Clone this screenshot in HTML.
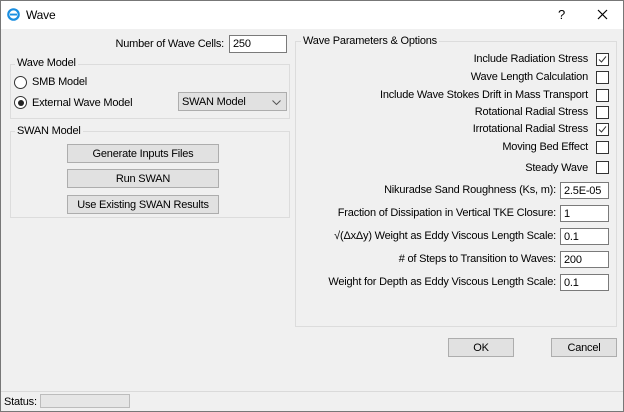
<!DOCTYPE html>
<html><head><style>
*{box-sizing:border-box;margin:0;padding:0}
body{width:624px;height:412px;position:relative;background:#f0f0f0;font-family:"Liberation Sans",sans-serif;font-size:11px;color:#000;overflow:hidden;letter-spacing:-0.2px}
.a{position:absolute;white-space:nowrap}
.r{text-align:right}
.grp{position:absolute;border:1px solid #dcdcdc}
.gt{position:absolute;background:#f0f0f0;padding:0 2px;line-height:13px}
.btn{position:absolute;background:#e1e1e1;border:1px solid #adadad;text-align:center;line-height:18px}
.inp{position:absolute;background:#fff;border:1px solid #7a7a7a;padding-left:3px;line-height:16px}
.cb{position:absolute;width:13px;height:13px;border:1px solid #333;background:#fff}
.rad{position:absolute;width:13px;height:13px;border:1px solid #333;border-radius:50%;background:#fff}
</style></head><body>
<div class="a" style="left:0;top:0;width:624px;height:29px;background:#fff"></div>
<div class="a" style="left:0;top:0;width:1px;height:412px;background:#777"></div>
<div class="a" style="right:0;top:0;width:1px;height:412px;background:#777"></div>
<div class="a" style="left:0;top:0;width:624px;height:1px;background:#777"></div>
<div class="a" style="left:0;bottom:0;width:624px;height:1px;background:#777"></div>
<svg class="a" style="left:7px;top:8px" width="13" height="13" viewBox="0 0 13 13"><circle cx="6.5" cy="6.5" r="5.2" fill="none" stroke="#1a8ee0" stroke-width="2.2"/><rect x="3" y="5.6" width="7" height="1.9" fill="#1a8ee0"/></svg>
<div class="a" style="left:26px;top:8px;font-size:12px">Wave</div>
<div class="a" style="left:558px;top:7px;font-size:13px">?</div>
<svg class="a" style="left:597px;top:9px" width="11" height="11"><path d="M1 1L10 10M10 1L1 10" stroke="#000" stroke-width="1.2"/></svg>

<div class="a r" style="right:400px;top:38px">Number of Wave Cells:</div>
<div class="inp" style="left:229px;top:35px;width:58px;height:18px">250</div>

<div class="grp" style="left:10px;top:64px;width:280px;height:55px"></div>
<div class="gt" style="left:15px;top:57px">Wave Model</div>
<div class="rad" style="left:14px;top:76px"></div>
<div class="a" style="left:32px;top:76px">SMB Model</div>
<div class="rad" style="left:14px;top:96px"><div style="position:absolute;left:2.5px;top:2.5px;width:6px;height:6px;border-radius:50%;background:#222"></div></div>
<div class="a" style="left:32px;top:97px">External Wave Model</div>
<div class="a" style="left:178px;top:92px;width:109px;height:19px;background:#e1e1e1;border:1px solid #adadad;padding-left:3px;line-height:18px">SWAN Model<svg style="position:absolute;right:5px;top:7px" width="9" height="5"><path d="M0.5 0.5L4.5 4.5L8.5 0.5" fill="none" stroke="#555"/></svg></div>

<div class="grp" style="left:10px;top:131px;width:280px;height:87px"></div>
<div class="gt" style="left:15px;top:125px">SWAN Model</div>
<div class="btn" style="left:67px;top:144px;width:152px;height:19px">Generate Inputs Files</div>
<div class="btn" style="left:67px;top:169px;width:152px;height:19px">Run SWAN</div>
<div class="btn" style="left:67px;top:195px;width:152px;height:19px">Use Existing SWAN Results</div>

<div class="grp" style="left:295px;top:41px;width:322px;height:286px"></div>
<div class="gt" style="left:301px;top:35px">Wave Parameters &amp; Options</div>

<div class="a r" style="right:36px;top:53px">Include Radiation Stress</div>
<div class="cb" style="left:596px;top:53px"><svg width="11" height="11"><path d="M2 5.5L4.5 8L9 2.5" fill="none" stroke="#333"/></svg></div>
<div class="a r" style="right:36px;top:71px">Wave Length Calculation</div>
<div class="cb" style="left:596px;top:71px"></div>
<div class="a r" style="right:36px;top:89px">Include Wave Stokes Drift in Mass Transport</div>
<div class="cb" style="left:596px;top:89px"></div>
<div class="a r" style="right:36px;top:106px">Rotational Radial Stress</div>
<div class="cb" style="left:596px;top:106px"></div>
<div class="a r" style="right:36px;top:123px">Irrotational Radial Stress</div>
<div class="cb" style="left:596px;top:123px"><svg width="11" height="11"><path d="M2 5.5L4.5 8L9 2.5" fill="none" stroke="#333"/></svg></div>
<div class="a r" style="right:36px;top:141px">Moving Bed Effect</div>
<div class="cb" style="left:596px;top:141px"></div>
<div class="a r" style="right:36px;top:162px">Steady Wave</div>
<div class="cb" style="left:596px;top:161px"></div>

<div class="a r" style="right:68px;top:184px">Nikuradse Sand Roughness (Ks, m):</div>
<div class="inp" style="left:560px;top:182px;width:49px;height:17px">2.5E-05</div>
<div class="a r" style="right:68px;top:207px">Fraction of Dissipation in Vertical TKE Closure:</div>
<div class="inp" style="left:560px;top:205px;width:49px;height:17px">1</div>
<div class="a r" style="right:68px;top:230px">√(ΔxΔy) Weight as Eddy Viscous Length Scale:</div>
<div class="inp" style="left:560px;top:228px;width:49px;height:17px">0.1</div>
<div class="a r" style="right:68px;top:253px"># of Steps to Transition to Waves:</div>
<div class="inp" style="left:560px;top:251px;width:49px;height:17px">200</div>
<div class="a r" style="right:68px;top:276px">Weight for Depth as Eddy Viscous Length Scale:</div>
<div class="inp" style="left:560px;top:274px;width:49px;height:17px">0.1</div>

<div class="btn" style="left:448px;top:338px;width:66px;height:19px">OK</div>
<div class="btn" style="left:551px;top:338px;width:66px;height:19px">Cancel</div>

<div class="a" style="left:1px;top:391px;width:622px;height:1px;background:#dadada"></div>
<div class="a" style="left:4px;top:396px">Status:</div>
<div class="a" style="left:40px;top:394px;width:90px;height:14px;background:#e6e6e6;border:1px solid #bcbcbc"></div>
</body></html>
